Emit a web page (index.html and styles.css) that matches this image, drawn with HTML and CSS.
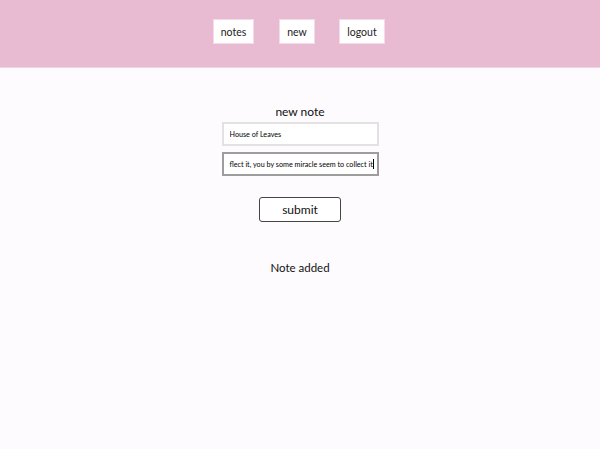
FILE: index.html
```html
<!DOCTYPE html>
<html>
<head>
<meta charset="utf-8">
<link rel="stylesheet" href="styles.css">
</head>
<body>
<header class="top">
  <nav class="nav">
    <a class="nav-btn nav-notes">notes</a>
    <a class="nav-btn nav-new">new</a>
    <a class="nav-btn nav-logout">logout</a>
  </nav>
</header>
<main class="main">
  <h2 class="title">new note</h2>
  <form class="form">
    <input class="field" type="text" value="House of Leaves">
    <div class="field field-focus"><span class="field-text">flect it, you by some miracle seem to collect it</span><span class="caret"></span></div>
    <button class="submit" type="button">submit</button>
  </form>
  <p class="status">Note added</p>
</main>
</body>
</html>
```
FILE: styles.css
```css
* { box-sizing: border-box; }
html, body { margin: 0; padding: 0; }
body {
  background: #fdfbfd;
  font-family: Lato, "Open Sans", sans-serif;
  color: #111;
  height: 449px;
}
.top {
  background: #e8bbd3;
  height: 68px;
  padding-top: 19px;
  border-bottom: 1px solid #f0d4e2;
}
.nav {
  display: flex;
  justify-content: center;
  gap: 25px;
  margin-left: -2px;
}
.nav-btn {
  display: flex;
  align-items: center;
  justify-content: center;
  height: 25px;
  background: #fff;
  border: 1px solid #f3dbe8;
  font-size: 10.5px;
  color: #222;
}
.nav-notes { width: 41px; }
.nav-new { width: 36px; margin-right: -1px; }
.nav-logout { width: 46px; }
.main {
  display: flex;
  flex-direction: column;
  align-items: center;
}
.title {
  margin: 35px 0 0;
  font-size: 12px;
  font-weight: 400;
  line-height: 18px;
}
.form {
  display: flex;
  flex-direction: column;
  align-items: center;
  margin-top: 1px;
}
.field {
  width: 157px;
  height: 24px;
  border: 2px solid #e2e2e2;
  background: #fff;
  font-family: inherit;
  font-size: 7.2px;
  padding: 0 6px;
  margin-bottom: 6px;
  color: #000;
  outline: none;
}
.field-focus {
  border-color: #9d9d9d;
  display: flex;
  align-items: center;
  overflow: hidden;
  white-space: nowrap;
  padding: 0 4px 0 6px;
  margin-bottom: 0;
}
.field-text { flex: none; }
.caret {
  flex: none;
  width: 1px;
  height: 10px;
  background: #000;
}
.submit {
  margin-top: 21px;
  width: 82px;
  height: 25px;
  background: #fff;
  border: 1px solid #444;
  border-radius: 3px;
  font-family: inherit;
  font-size: 12px;
  color: #111;
  padding: 0;
}
.status {
  margin: 38px 0 0;
  font-size: 11.5px;
  line-height: 16px;
}
```
